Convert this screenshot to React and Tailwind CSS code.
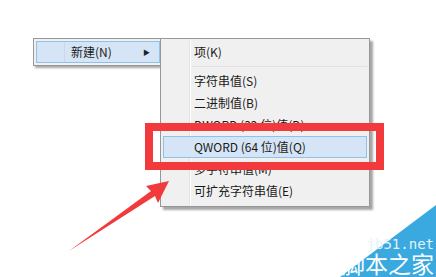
export default function App() {
  const items = [
    { label: '字符串值(S)' },
    { label: '二进制值(B)' },
    { label: 'DWORD (32 位)值(D)' },
    { label: 'QWORD (64 位)值(Q)', active: true },
    { label: '多字符串值(M)' },
    { label: '可扩充字符串值(E)' },
  ]

  return (
    <div className="relative w-[436px] h-[277px] overflow-hidden bg-white text-[12px] text-[#1a1a1a] [font-family:'Noto_Sans_CJK_SC','Noto_Sans',sans-serif]">
      {/* parent menu */}
      <div className="absolute left-[33px] top-[38px] w-[130px] h-[28px] border border-[#979797] bg-[#f0f0f0] p-[2px] shadow-[2px_2px_2px_rgba(0,0,0,0.35)]">
        <div className="flex h-full items-center border border-[#90c0ec] bg-[#d5e5f5]">
          <div className="w-[28px] h-full border-r border-[#c6d8ea]" />
          <span className="ml-[6px] flex-1">新建(N)</span>
          <span className="mr-[9px] text-[7px] text-[#222]">▶</span>
        </div>
      </div>

      {/* submenu */}
      <div className="absolute left-[160px] top-[38px] w-[210px] h-[169px] border border-[#979797] bg-[#f0f0f0] p-[2px] shadow-[3px_3px_2px_rgba(0,0,0,0.35)]">
        <div className="relative flex flex-col">
          <div className="absolute left-[26px] top-0 h-[164px] w-px bg-[#e2e2e2]" />
          <div className="absolute left-[27px] top-0 h-[164px] w-px bg-white" />
          <div className="flex h-[22px] items-center pl-[31px]">项(K)</div>
          <div className="flex h-[7px] items-center pl-[28px]">
            <div className="h-px w-full bg-[#e2e2e2]" />
          </div>
          {items.map((it) => (
            <div
              key={it.label}
              className={
                it.active
                  ? 'relative flex h-[22px] items-center pl-[30px] border border-[#90c0ec] bg-[#d5e5f5]'
                  : 'relative flex h-[22px] items-center pl-[31px]'
              }
            >
              {it.label}
            </div>
          ))}
        </div>
      </div>

      {/* red highlight box */}
      <div className="absolute left-[145px] top-[123px] w-[239px] h-[47px] border-[8px] border-[#f2393b]" />

      {/* red arrow */}
      <svg className="absolute left-0 top-0" width="436" height="277" viewBox="0 0 436 277">
        <polygon
          points="69,251 151,191 146,186 169,181 158,203 155,196"
          fill="#f2393b"
        />
      </svg>

      {/* watermark */}
      <svg className="absolute left-0 top-0" width="436" height="277" viewBox="0 0 436 277">
        <polygon points="340,277 436,205 436,277" fill="#3aa9e0" />
      </svg>
      <div className="absolute right-[2px] bottom-[2px] flex flex-col items-end gap-[1px]">
        <span className="block h-[13px] text-[14px] leading-[13px] text-[#e4f3fb] [font-family:'DejaVu_Sans_Mono',monospace]">
          jb51.net
        </span>
        <span className="block h-[23px] text-[23px] leading-[23px] text-white [font-family:'Noto_Sans_CJK_SC',sans-serif]">
          脚本之家
        </span>
      </div>
    </div>
  )
}
